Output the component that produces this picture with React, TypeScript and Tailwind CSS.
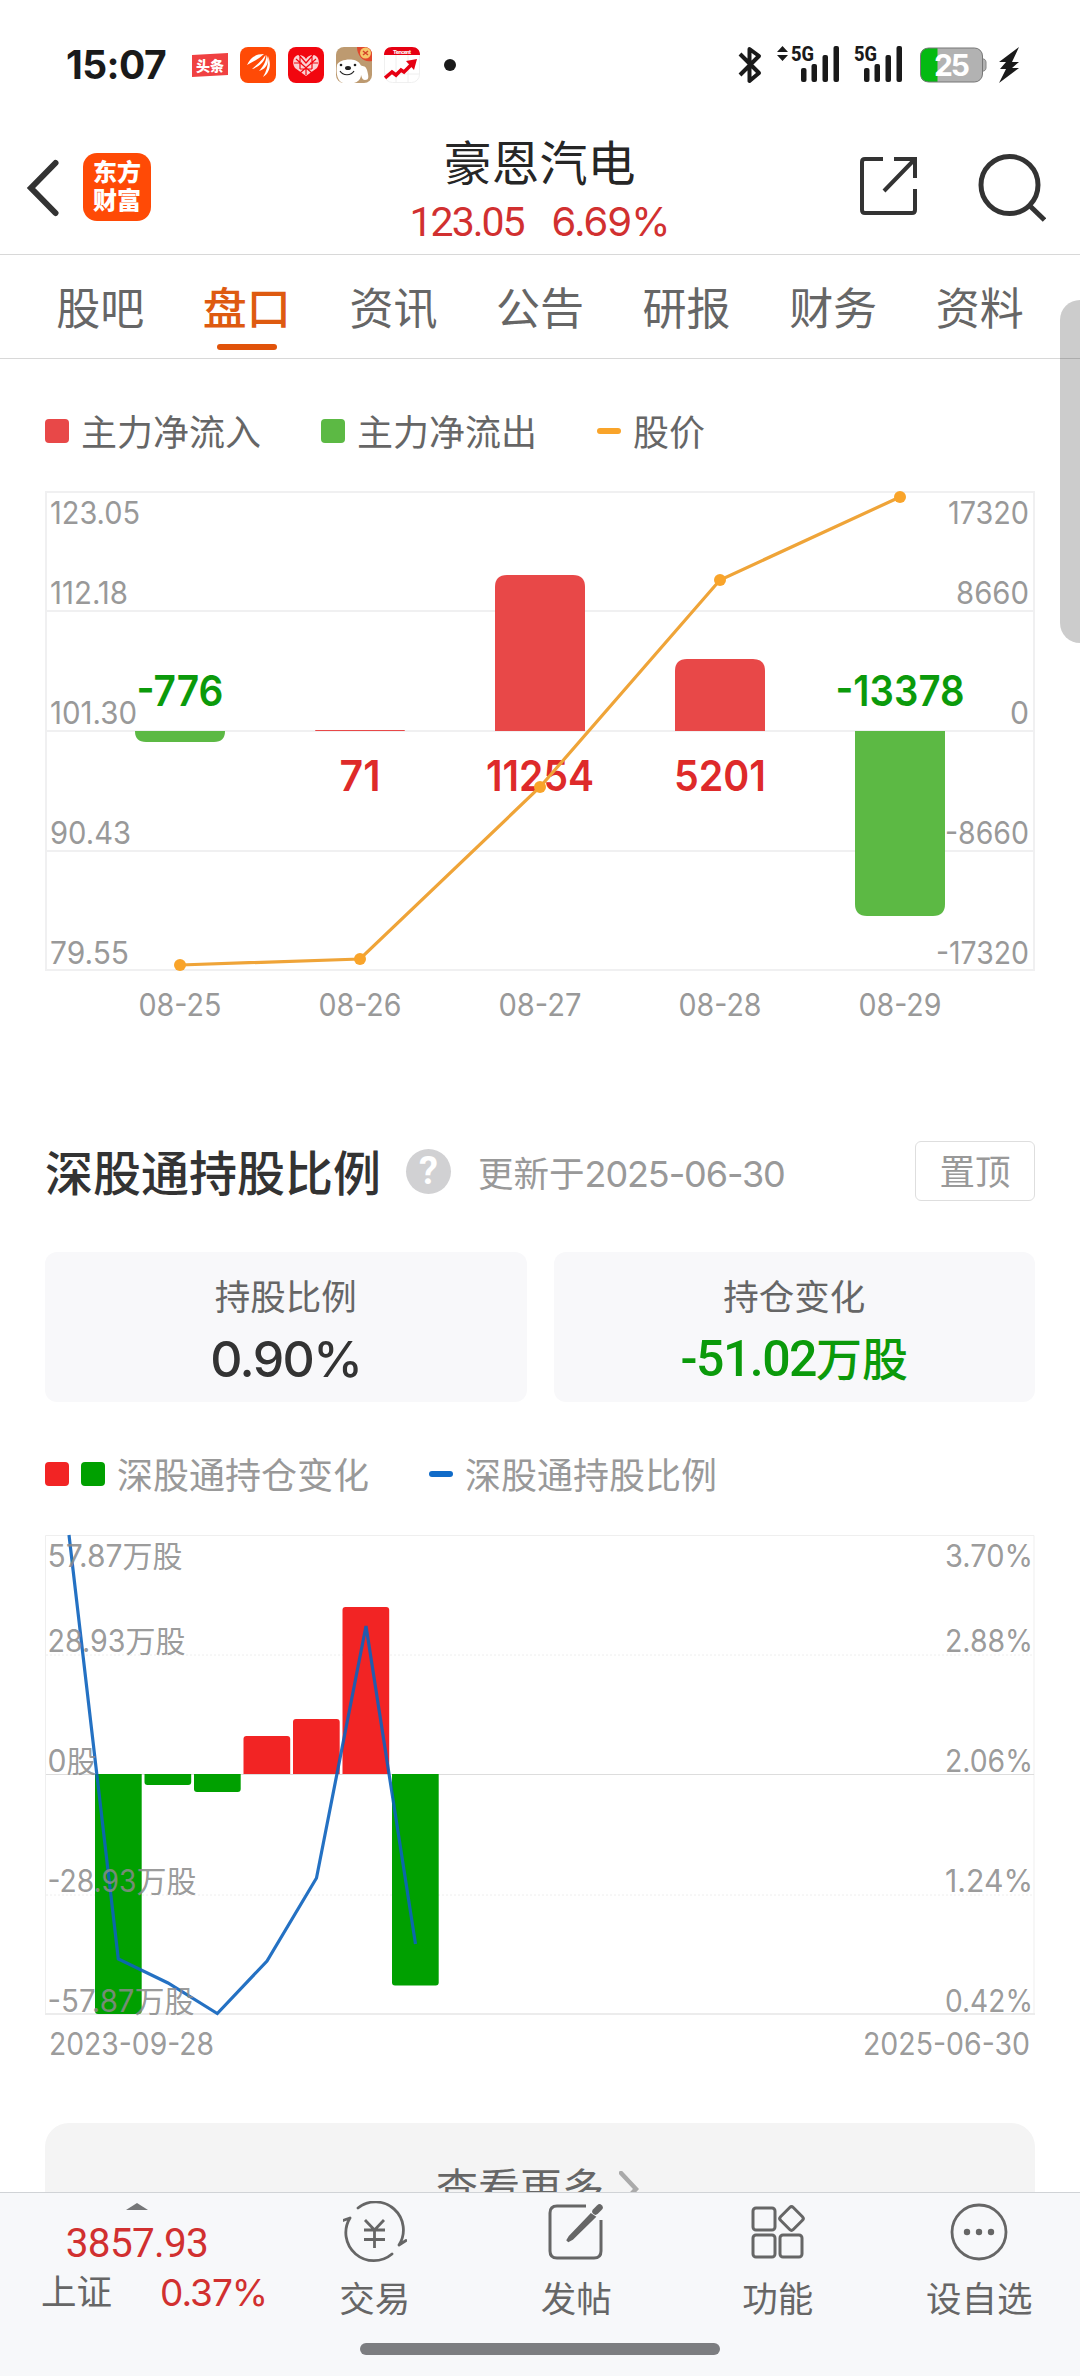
import React from 'react';
import { clsx } from 'clsx';

const tabs = ['股吧', '盘口', '资讯', '公告', '研报', '财务', '资料'];

const flowBars = [
  { date: '08-25', x: 180, top: 251, bottom: 262, label: '-776', labelY: 226, width: 87, up: false },
  { date: '08-26', x: 360, top: 250, bottom: 251, label: '71', labelY: 311, width: 41, up: true },
  { date: '08-27', x: 540, top: 95, bottom: 251, label: '11254', labelY: 311, width: 108, up: true },
  { date: '08-28', x: 720, top: 179, bottom: 251, label: '5201', labelY: 311, width: 92, up: true },
  { date: '08-29', x: 900, top: 251, bottom: 436, label: '-13378', labelY: 226, width: 129, up: false },
];

const pricePoints = [
  [180, 485],
  [360, 479],
  [540, 307],
  [720, 100],
  [900, 17],
];

const flowAxis = [
  { y: 43.5, left: '123.05', lw: 90, right: '17320', rw: 81 },
  { y: 123.5, left: '112.18', lw: 78, right: '8660', rw: 73 },
  { y: 243.5, left: '101.30', lw: 87, right: '0', rw: 19 },
  { y: 363.5, left: '90.43', lw: 81, right: '-8660', rw: 84 },
  { y: 483.5, left: '79.55', lw: 79, right: '-17320', rw: 93 },
];

const holdBars = [
  { x: 95, top: 254, bottom: 494, up: false },
  { x: 144.5, top: 254, bottom: 265, up: false },
  { x: 194, top: 254, bottom: 272, up: false },
  { x: 243.5, top: 216, bottom: 254, up: true },
  { x: 293, top: 199, bottom: 254, up: true },
  { x: 342.5, top: 87, bottom: 254, up: true },
  { x: 392, top: 254, bottom: 465.5, up: false },
];

const holdAxis = [
  { y: 47, left: '57.87', lw: 75, unit: '万股', right: '3.70%' },
  { y: 131.5, left: '28.93', lw: 78, unit: '万股', right: '2.88%' },
  { y: 251.5, left: '0', lw: 19, unit: '股', right: '2.06%' },
  { y: 371.5, left: '-28.93', lw: 89, unit: '万股', right: '1.24%' },
  { y: 491.5, left: '-57.87', lw: 87, unit: '万股', right: '0.42%' },
];

// Bar with rounded corners only on the end away from the zero line
const barPath = (x: number, top: number, w: number, bottom: number, r: number, up: boolean) => {
  const rr = Math.min(r, bottom - top);
  return up
    ? `M${x} ${bottom}V${top + rr}Q${x} ${top} ${x + rr} ${top}H${x + w - rr}Q${x + w} ${top} ${x + w} ${top + rr}V${bottom}Z`
    : `M${x} ${top}V${bottom - rr}Q${x} ${bottom} ${x + rr} ${bottom}H${x + w - rr}Q${x + w} ${bottom} ${x + w} ${bottom - rr}V${top}Z`;
};

const Signal = ({ data }: { data?: boolean }) => (
  <svg width="64" height="40" viewBox="0 0 64 40" fill="#1a1a1a" className="overflow-visible">
    {data && <path d="M0 7L5.5 1L11 7ZM0 10L5.5 16L11 10Z" />}
    <text x="14" y="16" fontSize="20" fontWeight="800" textLength="23" lengthAdjust="spacingAndGlyphs">5G</text>
    <rect x="24" y="23" width="5.5" height="14" rx="2" />
    <rect x="34.5" y="19" width="5.5" height="18" rx="2" />
    <rect x="45.5" y="10" width="5.5" height="27" rx="2" />
    <rect x="56.5" y="1" width="5.5" height="36" rx="2" />
  </svg>
);

const StatusBar = () => (
  <div className="h-[130px] shrink-0 pl-[66px] pr-[60px] flex items-center justify-between text-[#1a1a1a]">
    <div className="flex items-center">
      <span className="w-[126px] font-['Inter'] text-[39px] leading-none font-bold tracking-[-0.6px] -mt-[2px]">15:07</span>
      <div className="flex items-center gap-3">
        <svg width="36" height="36" viewBox="0 0 36 36">
          <path d="M0 8L36 6V28L0 30Z" fill="#f04142" />
          <text x="4" y="24" fontSize="14" fontWeight="800" fill="#fff" textLength="28">头条</text>
        </svg>
        <svg width="36" height="36" viewBox="0 0 36 36">
          <rect width="36" height="36" rx="8" fill="#ff4a06" />
          <path d="M7 18C10 11 15 7 24 7C20 11 13 15 7 18ZM12 22C17 18 23 12 25.500 8C25.500 14 19 20 12 22ZM19 24C24 19 26.500 13 26.500 8C30 14 27 22 19 24ZM23 30C27 24 29 15 28 9C31 16 31 25 23 30Z" fill="#fff" />
        </svg>
        <svg width="36" height="36" viewBox="0 0 36 36">
          <rect width="36" height="36" rx="8" fill="#f2060f" />
          <path d="M18 29L7 21C3 15 6 8 11 8C14 8 16 9 18 12C20 9 22 8 25 8C30 8 33 15 29 21Z" fill="#fbd0d2" />
          <path d="M8 12L24 26M28 12L12 26M6 16H14M22 16H30M11 8L18 16L25 8M12 22H24M12 10V22M24 10V22M18 20V28" stroke="#f2060f" strokeWidth="1.2" fill="none" />
        </svg>
        <svg width="36" height="36" viewBox="0 0 36 36">
          <rect width="36" height="36" rx="8" fill="#bd9a70" />
          <path d="M21 0H28Q36 0 36 8V14C28 16 21 9 21 0Z" fill="#e2472c" />
          <circle cx="29.500" cy="6" r="5.500" fill="#f6c66a" />
          <path d="M27 4L32 8M32 4L27 8" stroke="#d4432b" strokeWidth="1.5" />
          <path d="M1 18C3 12 20 10 24 17C26 21 29 17 31 23C33 30 33 33 29 33C26 33 26 30 25 28C25 32 22 35 18 36H7C1 34 0 26 1 18Z" fill="#fff" />
          <ellipse cx="12" cy="21" rx="3" ry="2" fill="#222" />
          <circle cx="5" cy="18" r="1.3" fill="#222" />
          <circle cx="19" cy="18" r="1.3" fill="#222" />
          <path d="M4 24C7 29 15 29 18 24" stroke="#222" strokeWidth="1.2" fill="none" />
        </svg>
        <svg width="36" height="36" viewBox="0 0 36 36">
          <rect x=".5" y=".5" width="35" height="35" rx="8" fill="#fff" stroke="#f0f0f0" />
          <path d="M0 8C0 3 3 0 8 0H28C33 0 36 3 36 8Z" fill="#e60012" />
          <text x="9" y="6.5" fontSize="6" fontWeight="700" fill="#fff" textLength="18">Tencent</text>
          <path d="M12 8V36M24 8V36M0 27H36" stroke="#eee" />
          <path d="M1 31L8 25L12 28L17 23L20 25L29 16" stroke="#e60012" strokeWidth="3.6" fill="none" />
          <path d="M22 14L33 12L30 23Z" fill="#e60012" />
        </svg>
      </div>
      <span className="ml-6 w-3 h-3 rounded-full bg-[#1a1a1a]" />
    </div>

    <div className="flex items-center">
      <svg width="24" height="38" viewBox="0 0 24 38" className="mr-[15px]">
        <path d="M2 8L21 27L11.500 35V3L21 10L2 29" fill="none" stroke="#1a1a1a" strokeWidth="4" strokeLinejoin="round" />
      </svg>
      <Signal data />
      <div className="-ml-px mr-[16px]"><Signal /></div>
      <svg width="67" height="36" viewBox="0 0 67 36" className="mr-[11px]">
        <path d="M62 12H64Q66 13 66 15V21Q66 23 64 24H62Z" fill="#b2b2b2" stroke="#888" />
        <rect x=".5" y="1" width="62" height="34" rx="8" fill="#b2b2b2" />
        <path d="M17.500 1H8.500Q.5 1 .5 9V27Q.5 35 8.500 35H17.500Z" fill="#04ba12" />
        <rect x=".5" y="1" width="62" height="34" rx="8" fill="none" stroke="#777" />
        <text x="14" y="29" fontSize="30" fontWeight="700" fill="#fff" textLength="36" className="font-['Inter']">25</text>
      </svg>
      <svg width="22" height="38" viewBox="0 0 22 38">
        <path d="M21 1L1 16H8L2 23H8L1 37L21 22H14L21 16H14Z" fill="#1a1a1a" />
      </svg>
    </div>
  </div>
);

const Header = () => (
  <div className="h-[125px] shrink-0 border-b border-[#d8d8d8] pl-[26px] pr-[34px] flex items-start justify-between">
    <div className="flex items-center pt-[23px] w-[340px]">
      <svg width="34" height="60" viewBox="0 0 34 60" className="mr-[23px]">
        <path d="M29.500 7L5 32L29.500 57" transform="translate(0 -1)" fill="none" stroke="#333" strokeWidth="6" strokeLinecap="round" />
      </svg>
      <div className="size-[68px] rounded-[14px] bg-[#ff4a06] text-white text-[24px] leading-[28px] font-black flex flex-col items-center justify-center">
        <span>东方</span>
        <span>财富</span>
      </div>
    </div>
    <div className="flex flex-col items-center pt-[8px]">
      <span className="text-[48px] leading-[54px] text-[#262626]">豪恩汽电</span>
      <span className="flex gap-[28px] text-[41px] leading-[54px] text-[#d13030] mt-[3px]">
        <span className="tracking-[-2px]">123.05</span>
        <span className="font-['Inter'] text-[40px] tracking-[-1px]">6.69%</span>
      </span>
    </div>
    <div className="flex items-center justify-end w-[333px] pt-[21px]">
      <svg width="62" height="62" viewBox="0 0 62 62" fill="none" stroke="#333" strokeWidth="4" className="mr-[57px]">
        <path d="M26 4H8Q5 4 5 7V55Q5 58 8 58H55Q58 58 58 55V34M37 4H58V23M58 4L27 36" transform="translate(0 -1)" />
      </svg>
      <svg width="70" height="72" viewBox="0 0 70 72" fill="none" stroke="#333" strokeWidth="5">
        <circle cx="33.500" cy="34" r="28.500" />
        <path d="M54 55L68.500 69" />
      </svg>
    </div>
  </div>
);

const LegendItem = ({ swatch, label, className }: { swatch: string[]; label: string; className?: string }) => (
  <div className={clsx('flex items-center', className)}>
    {swatch.map((s) => (
      <span key={s} className={clsx('w-6 rounded-[4px] mr-3', s)} />
    ))}
    <span className="text-[36px] leading-[36px] pt-[6px]">{label}</span>
  </div>
);

const FlowChart = () => (
  <svg width="1080" height="550" viewBox="0 0 1080 550" className="mt-[31px] shrink-0 font-['Inter']">
    <g stroke="#f0f0f1" strokeWidth="2" fill="none">
      <rect x="46" y="12" width="988" height="478" />
      <path d="M45 131H1034M45 251H1034M45 371H1034" />
    </g>
    <g fontSize="31" fill="#999">
      {flowAxis.map((a) => (
        <g key={a.y}>
          <text x="50" y={a.y} textLength={a.lw} lengthAdjust="spacingAndGlyphs">{a.left}</text>
          <text x={1029 - a.rw} y={a.y} textLength={a.rw} lengthAdjust="spacingAndGlyphs">{a.right}</text>
        </g>
      ))}
      {flowBars.map((b) => (
        <text key={b.date} x={b.x - 41.5} y="536" textLength="83" lengthAdjust="spacingAndGlyphs">{b.date}</text>
      ))}
    </g>
    {flowBars.map((b) => (
      <g key={b.date}>
        <path d={barPath(b.x - 45, b.top, 90, b.bottom, 12, b.up)} fill={b.up ? '#e84848' : '#5cb944'} />
        <text
          x={b.x - b.width / 2}
          y={b.labelY}
          fontSize="43"
          fontWeight="600"
          textLength={b.width}
          lengthAdjust="spacingAndGlyphs"
          fill={b.up ? '#de2a2a' : '#0b9a0b'}
        >
          {b.label}
        </text>
      </g>
    ))}
    <polyline points={pricePoints.map((p) => p.join(',')).join(' ')} fill="none" stroke="#efa438" strokeWidth="3.2" />
    {pricePoints.map(([x, y]) => (
      <circle key={x} cx={x} cy={y} r="6" fill="#f9a42a" />
    ))}
  </svg>
);

const HoldChart = () => (
  <svg width="1080" height="560" viewBox="0 0 1080 560" className="mt-[28px] shrink-0 font-['Inter','Noto_Sans_CJK_SC',sans-serif]">
    <path d="M45.500 494V15.500H1034V494" stroke="#efefef" fill="none" />
    <path d="M45 494H1035" stroke="#ececec" strokeWidth="2" />
    <path d="M46 135H1034M46 375H1034" stroke="#eee" strokeDasharray="2 2" />
    <path d="M46 254.500H1034" stroke="#ddd" />
    {holdBars.map((b) => (
      <path key={b.x} d={barPath(b.x, b.top, 46.7, b.bottom, 3, b.up)} fill={b.up ? '#f22424' : '#00a000'} />
    ))}
    <polyline
      points="69,15 118.3,439 168,463 217.3,493.5 267,441 316.5,358 366,106 415.5,424"
      fill="none"
      stroke="#0c62bd"
      strokeOpacity=".9"
      strokeWidth="3.2"
    />
    <g fontSize="30.5" fill="#8a8a8a" fillOpacity=".87">
      {holdAxis.map((a) => (
        <g key={a.y}>
          <text x="47.5" y={a.y} textLength={a.lw} lengthAdjust="spacingAndGlyphs">{a.left}</text>
          <text x={47.5 + a.lw} y={a.y} fontSize="30">{a.unit}</text>
          <text x="945" y={a.y} textLength="88" lengthAdjust="spacingAndGlyphs">{a.right}</text>
        </g>
      ))}
      <text x="49" y="535" textLength="165" lengthAdjust="spacingAndGlyphs">2023-09-28</text>
      <text x="863" y="535" textLength="167" lengthAdjust="spacingAndGlyphs">2025-06-30</text>
    </g>
  </svg>
);

const StatCard = ({ label, value, color }: { label: string; value: React.ReactNode; color: string }) => (
  <div className="flex-1 h-[150px] rounded-[12px] bg-[#f8f8fa] flex flex-col items-center pt-[24px]">
    <span className="text-[35.5px] leading-[44px] text-[#666]">{label}</span>
    <span className={clsx('text-[50px] leading-[60px] font-medium mt-[9px] flex items-baseline', color)}>{value}</span>
  </div>
);

const navItems = [
  {
    name: '交易',
    icon: (
      <g strokeWidth="2.800">
        <path d="M16 8A28 28 0 0 1 57 45L64 40.500M50 54A28 28 0 0 1 8 18L1 20.500" transform="translate(-1 -1)" strokeLinejoin="round" strokeLinecap="round" />
        <path d="M22 19L31.500 29L41 19M31.500 29V47M21 29H42M21 38.500H42" />
      </g>
    ),
  },
  {
    name: '发帖',
    icon: (
      <g strokeWidth="3">
        <path d="M42 5H13Q6 5 6 12V50Q6 57 13 57H50Q57 57 57 50V19" />
        <path d="M47 14L26 36L23.500 40L28 37.500L50 16Z" fill="#666" stroke="#666" />
        <path d="M51.500 10.500L55.500 6.500" strokeWidth="6.500" strokeLinecap="round" />
      </g>
    ),
  },
  {
    name: '功能',
    icon: (
      <g strokeWidth="3">
        <rect x="7" y="7" width="22" height="22" rx="3" />
        <rect x="7" y="34" width="22" height="22" rx="3" />
        <rect x="34" y="34" width="22" height="22" rx="3" />
        <rect x="36.500" y="8.500" width="18" height="18" rx="2.500" transform="rotate(45 45.500 17.500)" />
      </g>
    ),
  },
  {
    name: '设自选',
    icon: (
      <g strokeWidth="2.800">
        <circle cx="32" cy="31" r="27" />
        <g fill="#666" stroke="none">
          <circle cx="20" cy="31" r="3.200" />
          <circle cx="32" cy="31" r="3.200" />
          <circle cx="44" cy="31" r="3.200" />
        </g>
      </g>
    ),
  },
];

const BottomNav = () => (
  <div className="h-[184px] shrink-0 bg-[#f7f8fa] border-t border-[#d0d3d6] flex flex-col items-center text-[#666]">
    <div className="w-full h-[150px] flex">
      <div className="w-[274px] flex flex-col items-center pt-[9px]">
        <svg width="22" height="8" viewBox="0 0 22 8">
          <path d="M0 8L11 1L22 8Z" fill="#757678" />
        </svg>
        <span className="text-[40.5px] leading-[48px] tracking-[-0.700px] text-[#d13030] mt-[9px]">3857.93</span>
        <div className="w-full pl-[41px] flex items-center mt-[2px]">
          <span className="w-[119px] text-[35.5px] leading-[48px]">上证</span>
          <span className="font-['Inter'] text-[37px] leading-[48px] tracking-[-1px] text-[#d13030]">0.37%</span>
        </div>
      </div>
      {navItems.map((item) => (
        <div key={item.name} className="w-[201.5px] flex flex-col items-center pt-[8px]">
          <svg width="64" height="62" viewBox="0 0 64 62" fill="none" stroke="#666">
            {item.icon}
          </svg>
          <span className="text-[35.5px] leading-[48px] mt-[13px]">{item.name}</span>
        </div>
      ))}
    </div>
    <div className="w-[360px] h-3 rounded-full bg-[#7c7d80]" />
  </div>
);

export default function App() {
  return (
    <div className="relative w-[1080px] h-[2376px] bg-white overflow-hidden flex flex-col font-['Roboto','Noto_Sans_CJK_SC',sans-serif]">
      <StatusBar />
      <Header />

      {/* Tabs */}
      <div className="h-[104px] shrink-0 border-b border-[#d8d8d8] px-[27px] grid grid-cols-7">
        {tabs.map((tab) => {
          const active = tab === '盘口';
          return (
            <div
              key={tab}
              className={clsx('flex flex-col items-center pt-[28px] text-[44px] leading-[54px]', active ? 'text-[#de5a10] font-medium' : 'text-[#666]')}
            >
              <span>{tab}</span>
              {active && <span className="mt-[7px] w-[60px] h-[6px] rounded-full bg-[#e1530a]" />}
            </div>
          );
        })}
      </div>

      <main className="flex-1 min-h-0 overflow-hidden flex flex-col">
        <div className="mt-[54px] h-[36px] shrink-0 pl-[45px] flex items-center text-[#666]">
          <LegendItem swatch={['h-6 bg-[#e84848]']} label="主力净流入" className="w-[276px]" />
          <LegendItem swatch={['h-6 bg-[#5cb944]']} label="主力净流出" className="w-[276px]" />
          <LegendItem swatch={['h-[6px] bg-[#f9a42a]']} label="股价" />
        </div>
        <FlowChart />

        <div className="mt-[111px] h-[60px] shrink-0 px-[45px] flex items-center">
          <h2 className="text-[48px] leading-[60px] pt-[8px] font-medium text-[#333]">深股通持股比例</h2>
          <span className="ml-[25px] size-[45px] rounded-full bg-[#d1d1d3] text-white text-[38px] leading-[45px] font-bold text-center">?</span>
          <span className="ml-[27px] pt-[6px] text-[35.5px] leading-[60px] text-[#999]">
            更新于<span className="font-['Inter'] text-[36px] tracking-[-1.1px]">2025-06-30</span>
          </span>
          <button className="ml-auto w-[120px] h-[60px] pt-[6px] rounded-[6px] border border-[#dedede] text-[35.5px] leading-none text-[#999]">
            置顶
          </button>
        </div>

        <div className="mt-[51px] px-[45px] shrink-0 flex gap-[27px]">
          <StatCard label="持股比例" value={<span className="font-['Inter'] tracking-[-1.6px]">0.90%</span>} color="text-[#333]" />
          <StatCard
            label="持仓变化"
            value={
              <>
                <span className="tracking-[-1.500px]">-51.02</span>
                <span className="text-[46px]">万股</span>
              </>
            }
            color="text-[#0b9a0b]"
          />
        </div>

        <div className="mt-[54px] h-[36px] shrink-0 pl-[45px] flex items-center text-[#999]">
          <LegendItem swatch={['h-6 bg-[#f22424]', 'h-6 bg-[#00a000]']} label="深股通持仓变化" className="w-[384px]" />
          <LegendItem swatch={['h-[6px] bg-[#106bc8]']} label="深股通持股比例" />
        </div>
        <HoldChart />

        <div className="mt-[43px] mx-[45px] h-[132px] shrink-0 rounded-[24px] bg-[#f4f4f4] flex items-center justify-center gap-[18px] text-[42px] text-[#666]">
          <span className="leading-none pt-[2px] -ml-[5px]">查看更多</span>
          <svg width="20" height="36" viewBox="0 0 20 36" className="-ml-[3px]">
            <path d="M2 2L17 18L2 34" fill="none" stroke="#aaa" strokeWidth="4.500" strokeLinecap="round" />
          </svg>
        </div>
      </main>

      <BottomNav />

      {/* Scroll indicator */}
      <div className="absolute right-0 top-[300px] w-[20px] h-[343px] rounded-l-[20px] bg-black/20" />
    </div>
  );
}
